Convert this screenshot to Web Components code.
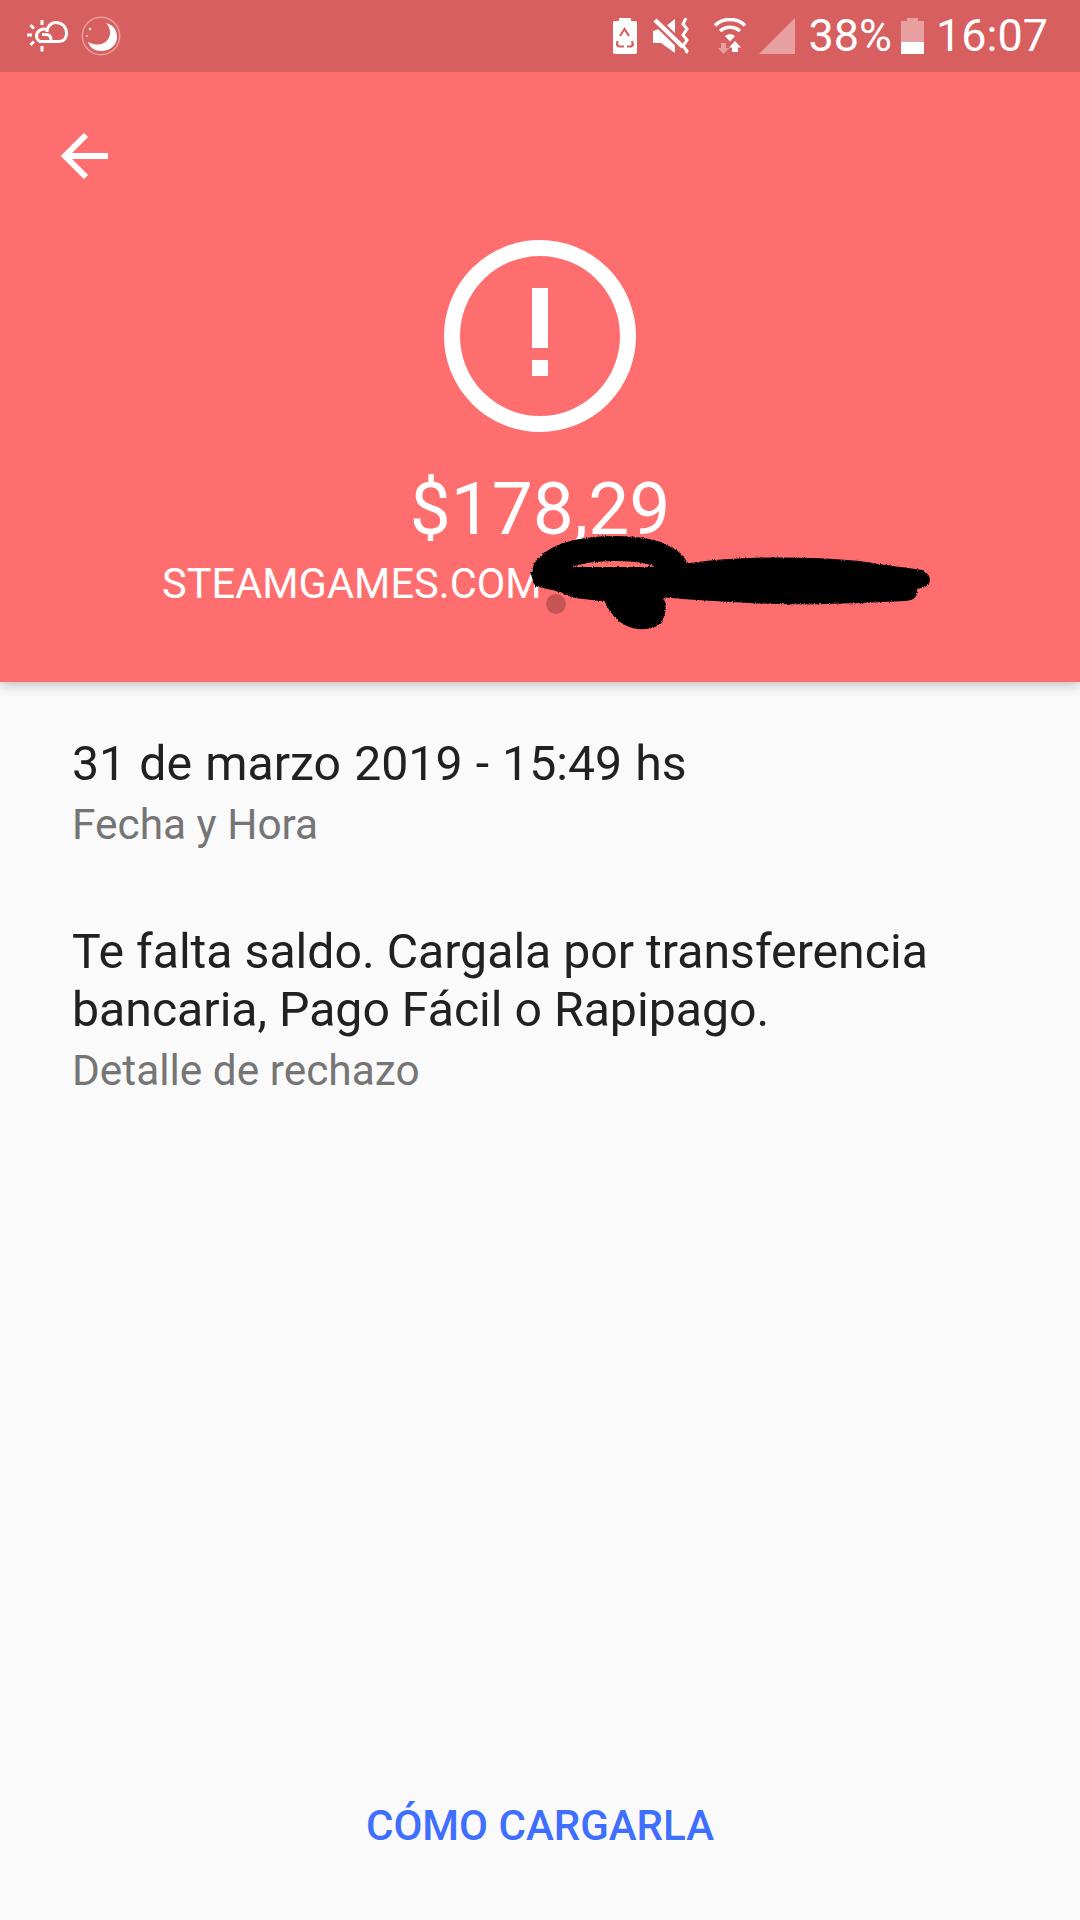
<!DOCTYPE html>
<html><head><meta charset="utf-8"><style>
html,body{margin:0;padding:0;height:1920px;width:1080px;overflow:hidden;background:#fafafa;font-family:Roboto,"Liberation Sans",sans-serif}
</style></head><body>
<app-screen>
  <status-bar></status-bar>
  <error-header amount="$178,29" merchant="STEAMGAMES.COM"></error-header>
  <main-body>
    <detail-item label="Fecha y Hora" style="--ws:1.2px">31 de marzo 2019 - 15:49 hs</detail-item>
    <detail-item label="Detalle de rechazo">Te falta saldo. Cargala por transferencia<br>bancaria, Pago Fácil o Rapipago.</detail-item>
  </main-body>
  <text-button>CÓMO CARGARLA</text-button>
</app-screen>
<script>
function def(name,html){customElements.define(name,class extends HTMLElement{constructor(){super();this.attachShadow({mode:'open'}).innerHTML=typeof html==='function'?html(this):html;}})}
def('app-screen',`<style>:host{display:flex;flex-direction:column;width:1080px;height:1920px;background:#fafafa}</style><slot></slot>`);
def('status-bar',`<style>:host{display:flex;align-items:center;height:72px;background:#d85f5f;color:#fff;flex:none;position:relative;z-index:2;padding:0 32px 0 26px;box-sizing:border-box;font:400 45px/72px Roboto,sans-serif}
svg{display:block;flex:none}.sp{flex:1}.pct{margin-left:13px}.time{margin-left:12px}</style>
<svg width="42" height="32" viewBox="0 0 42 32"><g fill="none" stroke="#fff" stroke-width="3"><path d="M15 21.500H33C38 21.500 40.500 18 40.500 13.500 40.500 7 36 2.500 30 2.500 25 2.500 21 6.500 21 12"/><path d="M22 9.500C16 7.500 10.500 11 10.500 16 10.500 19 12.500 21 15 22"/><path d="M16 14.500H20C23 14.500 25 16.500 25 20"/><path d="M16 0v5M16 26v5.500M1 15h5M4.500 5l3.500 3.500M4.500 25l3.500-3.500"/></g></svg>
<svg width="40" height="40" viewBox="0 0 40 40" style="margin-left:13px"><circle cx="20" cy="20" r="18.700" fill="none" stroke="#fff" stroke-opacity=".4" stroke-width="1.500"/><path d="M25 7C33 9 36 15 36 21 36 29 29 35 20 35 14 35 9 32 7 26 11 28 14 28.500 17 28.500 24 28.500 29 23 29 17 29 13 28 10 25 7Z" fill="#fff"/><circle cx="9" cy="13" r="1.200" fill="#fff"/><circle cx="6" cy="20" r=".8" fill="#fff"/></svg>
<div class="sp"></div>
<svg width="24" height="36" viewBox="0 0 24 36"><path d="M6 0h12v3h4a2 2 0 0 1 2 2v29a2 2 0 0 1-2 2H2a2 2 0 0 1-2-2V5a2 2 0 0 1 2-2h4z" fill="#fff"/><path d="M7 18l4.500-7 4.500 7M4.500 23l-.5 4 2 1.500h5M19 23l1 4-2 1.500h-4" stroke="#d85f5f" stroke-width="2.200" fill="none"/></svg>
<svg width="38" height="36" viewBox="0 0 38 36" style="margin-left:16px"><path d="M22 1L12 9 0 13V25H8L22 35Z" fill="#fff"/><path d="M1 1L30 29" stroke="#d85f5f" stroke-width="9"/><path d="M2 2L30 29" stroke="#fff" stroke-width="4.500"/><path d="M33 0L30 6 34 11 30 17 34 22 30 28 34 33 33 35" fill="none" stroke="#fff" stroke-width="3"/></svg>
<svg width="32" height="36" viewBox="0 0 32 36" style="margin-left:23px"><g fill="none" stroke="#fff" stroke-width="3.500"><path d="M1 7.500C9-.5 23-.5 31 7.500"/><path d="M6 13C12 8 20 8 26 13"/></g><path d="M11 18C14 15.500 18 15.500 21 18L16 23.500Z" fill="#fff"/><path d="M21 23L27 29.500H24V34H18V29.500H15Z" fill="#fff"/><path d="M7 25H12V30H15.500L9.500 36 4 30H7Z" fill="#fff" fill-opacity=".4"/></svg>
<svg width="36" height="36" viewBox="0 0 36 36" style="margin-left:13px"><path d="M36 0V36H0Z" fill="#fff" fill-opacity=".4"/></svg>
<span class="pct">38%</span>
<svg width="23" height="36" viewBox="0 0 23 36" style="margin-left:9px"><path d="M6 0H17V3H23V24H0V3H6Z" fill="#fff" fill-opacity=".4"/><path d="M0 24H23V36H0Z" fill="#fff"/></svg>
<span class="time">16:07</span>`);
def('error-header',h=>`<style>:host{display:block;flex:none;position:relative;z-index:1;height:610px;background:#ff6e6e;color:#fff;box-shadow:0 2px 12px rgba(0,0,0,.28);text-align:center}
.nav{height:92px;padding:61px 0 0 61px;box-sizing:border-box}
.ico{display:block;margin:76px auto 0}
.amt{font:400 73px/84px Roboto,sans-serif;margin-top:35px}
.mer{font:400 41.600px/48px Roboto,sans-serif;display:flex;padding-left:162px;margin-top:9px}
.scr{position:absolute;left:520px;top:448px}</style>
<div class="nav"><svg width="48" height="46" viewBox="0 0 48 46" style="display:block" fill="none" stroke="#fff" stroke-width="6"><path d="M47 23H4M25 2L4 23 25 44"/></svg></div>
<svg class="ico" width="192" height="192" viewBox="0 0 192 192"><circle cx="96" cy="96" r="88" fill="none" stroke="#fff" stroke-width="16"/><path d="M88 48h16v60H88zM88 120h16v16H88z" fill="#fff"/></svg>
<div class="amt">${h.getAttribute('amount')}</div>
<div class="mer">${h.getAttribute('merchant')}</div>
<svg class="scr" width="420" height="120" viewBox="520 520 420 120"><defs><filter id="g" filterUnits="userSpaceOnUse" x="520" y="520" width="420" height="120"><feTurbulence type="fractalNoise" baseFrequency=".9" numOctaves="2" seed="3" result="n"/><feDisplacementMap in="SourceGraphic" in2="n" scale="3" xChannelSelector="R" yChannelSelector="G"/></filter></defs>
<circle cx="556" cy="604" r="10" fill="#8e3a3a" fill-opacity=".5"/>
<g filter="url(#g)"><g fill="none" stroke="#060404" stroke-linecap="round" stroke-linejoin="round">
<path d="M545 570C558 551 598 547 630 549 660 551 674 560 678 572" stroke-width="25"/>
<path d="M618 597C625 612 636 618 650 614 654 606 650 600 645 594" stroke-width="28"/>
</g><path d="M530 572L560 567 650 567 690 563C730 557 800 555 860 561 890 566 910 568 922 570 932 575 932 583 925 587L917 589C918 597 914 600 906 601 860 603 800 606 750 603 720 601 690 600 660 597L600 601 575 598 560 592 535 586Z" fill="#050303"/></g></svg>`);
def('main-body',`<style>:host{display:block;flex:1;padding:53px 72px 0}</style><slot></slot>`);
def('detail-item',h=>`<style>:host{display:block;margin-bottom:73px}
.v{font:400 48.200px/58px Roboto,sans-serif;color:#212121;word-spacing:var(--ws,0)}.l{font:400 42.400px/50px Roboto,sans-serif;color:#757575;margin-top:7px}</style>
<div class="v"><slot></slot></div><div class="l">${h.getAttribute('label')}</div>`);
def('text-button',`<style>:host{display:block;flex:none;height:100px;margin-bottom:44px;text-align:center;font:500 42px/100px Roboto,sans-serif;color:#3f6fff}</style><slot></slot>`);
</script>
</body></html>
